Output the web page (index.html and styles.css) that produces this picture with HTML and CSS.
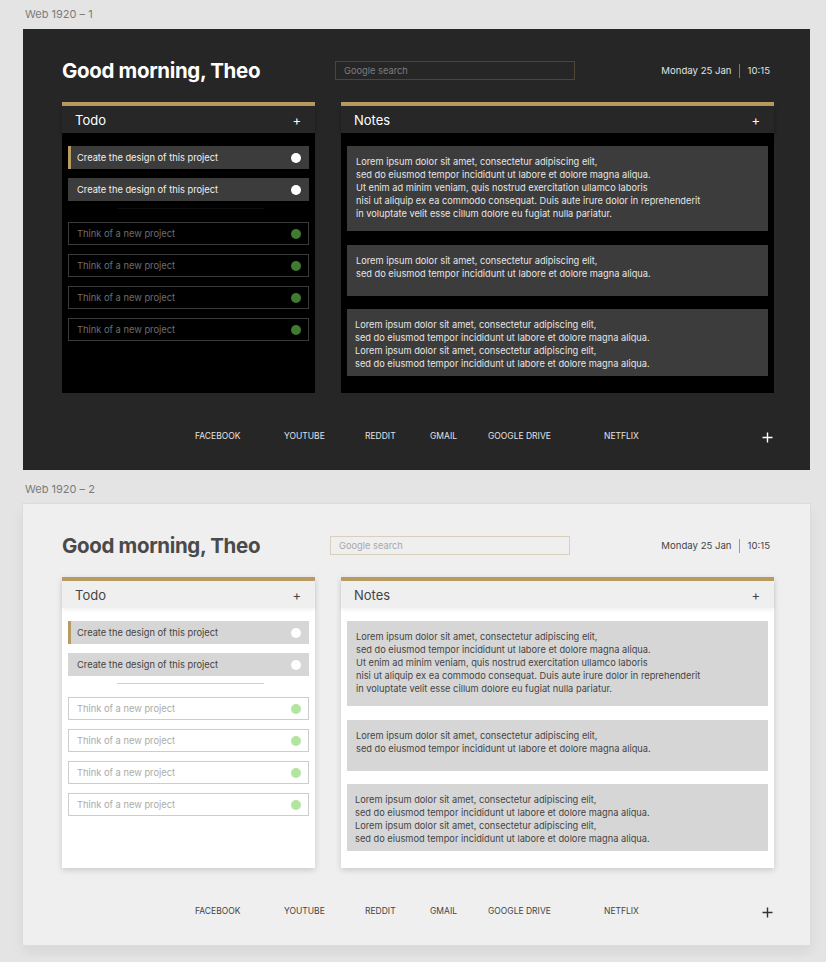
FILE: index.html
```html
<!DOCTYPE html>
<html lang="en">
<head>
<meta charset="utf-8">
<title>Dashboard</title>
<link rel="stylesheet" href="styles.css">
</head>
<body>
  <div class="artboard">
    <div class="artboard-label">Web 1920 – 1</div>
    <div class="frame theme-dark">
      <header class="top">
        <h1 class="greeting">Good morning, Theo</h1>
        <div class="search">Google search</div>
        <div class="datetime"><span>Monday 25 Jan</span><i class="sep"></i><span>10:15</span></div>
      </header>
      <div class="cards">
        <section class="card">
          <div class="card-head"><span>Todo</span><span class="add">+</span></div>
          <div class="card-body todo-body">
            <div class="task task-active"><span>Create the design of this project</span><i class="dot"></i></div>
            <div class="task"><span>Create the design of this project</span><i class="dot"></i></div>
            <div class="divider"></div>
            <div class="task task-new"><span>Think of a new project</span><i class="dot"></i></div>
            <div class="task task-new"><span>Think of a new project</span><i class="dot"></i></div>
            <div class="task task-new"><span>Think of a new project</span><i class="dot"></i></div>
            <div class="task task-new"><span>Think of a new project</span><i class="dot"></i></div>
          </div>
        </section>
        <section class="card">
          <div class="card-head"><span>Notes</span><span class="add">+</span></div>
          <div class="card-body notes-body">
            <div class="note note-a">Lorem ipsum dolor sit amet, consectetur adipiscing elit,<br>sed do eiusmod tempor incididunt ut labore et dolore magna aliqua.<br>Ut enim ad minim veniam, quis nostrud exercitation ullamco laboris<br>nisi ut aliquip ex ea commodo consequat. Duis aute irure dolor in reprehenderit<br>in voluptate velit esse cillum dolore eu fugiat nulla pariatur.</div>
            <div class="note note-b">Lorem ipsum dolor sit amet, consectetur adipiscing elit,<br>sed do eiusmod tempor incididunt ut labore et dolore magna aliqua.</div>
            <div class="note note-c">Lorem ipsum dolor sit amet, consectetur adipiscing elit,<br>sed do eiusmod tempor incididunt ut labore et dolore magna aliqua.<br>Lorem ipsum dolor sit amet, consectetur adipiscing elit,<br>sed do eiusmod tempor incididunt ut labore et dolore magna aliqua.</div>
          </div>
        </section>
      </div>
      <footer class="links">
        <a class="l1">FACEBOOK</a><a class="l2">YOUTUBE</a><a class="l3">REDDIT</a><a class="l4">GMAIL</a><a class="l5">GOOGLE DRIVE</a><a class="l6">NETFLIX</a>
        <svg class="plus" width="11" height="11" viewBox="0 0 11 11"><path d="M5.5 0.5v10M0.5 5.5h10" stroke="currentColor" stroke-width="1.4" fill="none"/></svg>
      </footer>
    </div>

    <div class="artboard-label">Web 1920 – 2</div>
    <div class="frame theme-light">
      <header class="top">
        <h1 class="greeting">Good morning, Theo</h1>
        <div class="search">Google search</div>
        <div class="datetime"><span>Monday 25 Jan</span><i class="sep"></i><span>10:15</span></div>
      </header>
      <div class="cards">
        <section class="card">
          <div class="card-head"><span>Todo</span><span class="add">+</span></div>
          <div class="card-body todo-body">
            <div class="task task-active"><span>Create the design of this project</span><i class="dot"></i></div>
            <div class="task"><span>Create the design of this project</span><i class="dot"></i></div>
            <div class="divider"></div>
            <div class="task task-new"><span>Think of a new project</span><i class="dot"></i></div>
            <div class="task task-new"><span>Think of a new project</span><i class="dot"></i></div>
            <div class="task task-new"><span>Think of a new project</span><i class="dot"></i></div>
            <div class="task task-new"><span>Think of a new project</span><i class="dot"></i></div>
          </div>
        </section>
        <section class="card">
          <div class="card-head"><span>Notes</span><span class="add">+</span></div>
          <div class="card-body notes-body">
            <div class="note note-a">Lorem ipsum dolor sit amet, consectetur adipiscing elit,<br>sed do eiusmod tempor incididunt ut labore et dolore magna aliqua.<br>Ut enim ad minim veniam, quis nostrud exercitation ullamco laboris<br>nisi ut aliquip ex ea commodo consequat. Duis aute irure dolor in reprehenderit<br>in voluptate velit esse cillum dolore eu fugiat nulla pariatur.</div>
            <div class="note note-b">Lorem ipsum dolor sit amet, consectetur adipiscing elit,<br>sed do eiusmod tempor incididunt ut labore et dolore magna aliqua.</div>
            <div class="note note-c">Lorem ipsum dolor sit amet, consectetur adipiscing elit,<br>sed do eiusmod tempor incididunt ut labore et dolore magna aliqua.<br>Lorem ipsum dolor sit amet, consectetur adipiscing elit,<br>sed do eiusmod tempor incididunt ut labore et dolore magna aliqua.</div>
          </div>
        </section>
      </div>
      <footer class="links">
        <a class="l1">FACEBOOK</a><a class="l2">YOUTUBE</a><a class="l3">REDDIT</a><a class="l4">GMAIL</a><a class="l5">GOOGLE DRIVE</a><a class="l6">NETFLIX</a>
        <svg class="plus" width="11" height="11" viewBox="0 0 11 11"><path d="M5.5 0.5v10M0.5 5.5h10" stroke="currentColor" stroke-width="1.4" fill="none"/></svg>
      </footer>
    </div>
  </div>
</body>
</html>
```

FILE: styles.css
```css
* { box-sizing: border-box; }

html, body {
  margin: 0;
  padding: 0;
  background: #e4e4e4;
  font-family: Inter, "Noto Sans", "Liberation Sans", sans-serif;
  overflow: hidden;
}

.artboard {
  padding: 7px 16px 0 23px;
}

.artboard-label {
  font-size: 11px;
  line-height: 14px;
  color: #7b7b7b;
  padding-left: 2px;
  margin-bottom: 8px;
}

.frame {
  width: 787px;
  height: 441px;
  padding: 32px 36px 0 39px;
  display: flex;
  flex-direction: column;
  margin-bottom: 12px;
}

.theme-dark {
  background: #262626;
  color: #fff;
}

.theme-light {
  background: #efefef;
  color: #4a4a4a;
  box-shadow: 0 0 0 1px #dcdcdc, 0 8px 14px rgba(0,0,0,0.06);
}

/* header */
.top {
  display: flex;
  align-items: center;
  height: 19px;
}

.greeting {
  margin: 0;
  width: 273px;
  font-size: 20.5px;
  font-weight: 700;
  letter-spacing: -0.35px;
  line-height: 19px;
  white-space: nowrap;
}

.theme-light .greeting { width: 268px; }

.search {
  width: 240px;
  height: 19px;
  border: 1px solid #4e4634;
  font-size: 9.3px;
  line-height: 17px;
  padding-left: 8px;
  color: #7d7d7d;
}

.theme-light .search {
  border-color: #d9cfbd;
  color: #a8a8a8;
  padding-left: 8px;
}

.datetime {
  margin-left: auto;
  margin-right: 4px;
  display: flex;
  align-items: center;
  font-size: 9.6px;
  color: #e2e2e2;
}

.theme-light .datetime { color: #444; }

.sep {
  width: 1px;
  height: 14px;
  background: #7a7a7a;
  margin: 0 8px 0 7px;
}

.theme-light .sep { background: #9a9a9a; }

/* cards */
.cards {
  margin-top: 22px;
  display: grid;
  grid-template-columns: 253px 433px;
  column-gap: 26px;
  height: 291px;
}

.card {
  display: flex;
  flex-direction: column;
  border-top: 4px solid #b89b60;
}

.theme-light .card { box-shadow: 0 2px 6px rgba(0,0,0,0.16); }

.card-head {
  height: 27px;
  display: flex;
  align-items: center;
  justify-content: space-between;
  padding: 0 14px 0 13px;
  font-size: 13px;
  box-shadow: 0 2px 4px rgba(0,0,0,0.3);
  position: relative;
  z-index: 1;
}

.theme-dark .card-head { background: #272727; color: #fff; }
.theme-light .card-head { background: #efefef; color: #444; box-shadow: 0 2px 4px rgba(0,0,0,0.06); }

.add { font-size: 13px; }

.card-body {
  flex: 1;
  padding: 13px 6px;
  display: flex;
  flex-direction: column;
}

.theme-dark .card-body { background: #000; }
.theme-light .card-body { background: #fff; }

/* tasks */
.task {
  height: 23px;
  display: flex;
  align-items: center;
  justify-content: space-between;
  padding: 0 8px 0 9px;
  font-size: 9.3px;
  margin-bottom: 9px;
  flex: none;
}

.theme-dark .task { background: #3c3c3c; color: #f0f0f0; }
.theme-light .task { background: #d6d6d6; color: #444; }

.task-active { border-left: 3px solid #b89b60; padding-left: 6px; }

.dot {
  width: 10px;
  height: 10px;
  border-radius: 50%;
  background: #fff;
}

.divider {
  height: 1px;
  margin: -2px 45px 13px 49px;
}

.theme-dark .divider { background: #0d0d0d; }
.theme-light .divider { background: #cfcfcf; }

.theme-dark .task-new { background: #000; border: 1px solid #3b3b3b; color: #6e6e6e; padding-left: 8px; padding-right: 7px; }
.theme-light .task-new { background: #fff; border: 1px solid #cdcdcd; color: #ababab; padding-left: 8px; padding-right: 7px; }

.theme-dark .task-new .dot { background: #3f7b33; }
.theme-light .task-new .dot { background: #b4e4a1; }

/* notes */
.note {
  padding: 9px 9px;
  font-size: 9.25px;
  line-height: 13px;
  white-space: nowrap;
  flex: none;
}

.theme-dark .note { background: #3c3c3c; color: #e6e6e6; }
.theme-light .note { background: #d6d6d6; color: #444; }

.note-a { height: 85px; margin-bottom: 14px; }
.note-b { height: 51px; margin-bottom: 13px; }
.note-c { height: 67px; padding-left: 8px; }

/* footer */
.links {
  display: flex;
  align-items: center;
  padding-top: 37px;
  height: 49px;
  font-size: 8.5px;
  line-height: 12px;
}

.links a { display: block; white-space: nowrap; }
.theme-dark .links { color: #e2e2e2; }
.theme-light .links { color: #444; }

.l1 { margin-left: 133px; width: 89px; }
.l2 { width: 81px; }
.l3 { width: 65px; }
.l4 { width: 58px; }
.l5 { width: 116px; }
.l6 { width: 40px; }

.plus {
  margin-left: auto;
  margin-right: 1px;
  margin-top: 2px;
}
.theme-dark .plus { color: #fff; }
.theme-light .plus { color: #333; }
```
